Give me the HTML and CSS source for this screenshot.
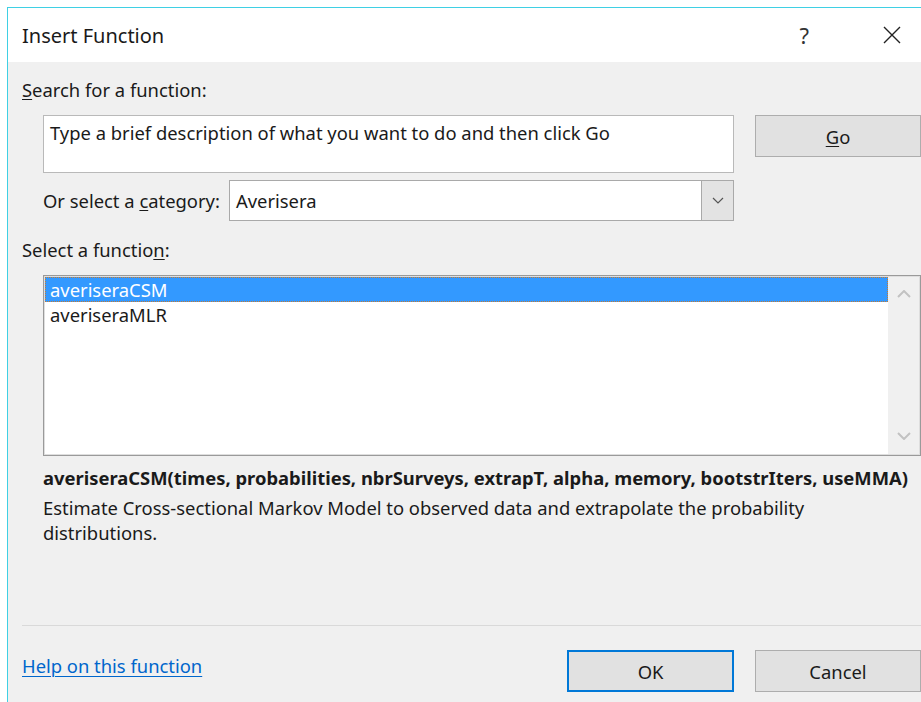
FILE: index.html
```html
<!DOCTYPE html>
<html lang="en">
<head>
<meta charset="utf-8">
<title>Insert Function</title>
<link rel="stylesheet" href="styles.css">
</head>
<body>
<div class="window">
  <header class="titlebar">
    <h1 class="title">Insert Function</h1>
    <div class="title-actions">
      <span class="help-btn">?</span>
      <svg class="close-btn" width="18" height="18" viewBox="0 0 18 18" aria-hidden="true">
        <path d="M1 1 L17 17 M17 1 L1 17" stroke="#222" stroke-width="1.4" fill="none"/>
      </svg>
    </div>
  </header>

  <main class="content">
    <div class="label"><u>S</u>earch for a function:</div>

    <div class="search-row">
      <div class="textbox">Type a brief description of what you want to do and then click Go</div>
      <button class="btn btn-go"><u>G</u>o</button>
    </div>

    <div class="category-row">
      <span class="category-label">Or select a <u>c</u>ategory:</span>
      <div class="select">
        <span class="select-value">Averisera</span>
        <span class="select-drop">
          <svg width="12" height="7" viewBox="0 0 12 7" aria-hidden="true">
            <path d="M1 1 L6 6 L11 1" stroke="#555" stroke-width="1.2" fill="none"/>
          </svg>
        </span>
      </div>
    </div>

    <div class="label label-list">Select a functio<u>n</u>:</div>

    <div class="listbox">
      <ul class="items">
        <li class="item selected">averiseraCSM</li>
        <li class="item">averiseraMLR</li>
      </ul>
      <div class="scrollbar">
        <svg width="14" height="8" viewBox="0 0 14 8" aria-hidden="true">
          <path d="M1 7 L7 1 L13 7" stroke="#c2c2c2" stroke-width="2" fill="none"/>
        </svg>
        <svg width="14" height="8" viewBox="0 0 14 8" aria-hidden="true">
          <path d="M1 1 L7 7 L13 1" stroke="#c2c2c2" stroke-width="2" fill="none"/>
        </svg>
      </div>
    </div>

    <p class="signature">averiseraCSM(times, probabilities, nbrSurveys, extrapT, alpha, memory, bootstrIters, useMMA)</p>
    <p class="description">Estimate Cross-sectional Markov Model to observed data and extrapolate the probability distributions.</p>

    <hr class="separator">

    <footer class="actions">
      <a class="help-link" href="#">Help on this function</a>
      <div class="buttons">
        <button class="btn btn-ok">OK</button>
        <button class="btn btn-cancel">Cancel</button>
      </div>
    </footer>
  </main>
</div>
</body>
</html>
```

FILE: styles.css
```css
* {
  box-sizing: border-box;
}

html, body {
  margin: 0;
  padding: 0;
  background: #ffffff;
  overflow: hidden;
}

body {
  font-family: "Noto Sans", "Open Sans", sans-serif;
  font-size: 18.4px;
  color: #1a1a1a;
}

.window {
  margin: 7px 0 0 7px;
  width: 914px;
  height: 695px;
  border-top: 1px solid #3fd0e4;
  border-left: 1px solid #3fd0e4;
  display: flex;
  flex-direction: column;
  overflow: hidden;
}

/* title bar */
.titlebar {
  height: 54px;
  flex: none;
  background: #ffffff;
  display: flex;
  align-items: center;
  justify-content: space-between;
  padding: 0 20px 0 14px;
}

.title {
  margin: 0;
  font-size: 20px;
  font-weight: normal;
  color: #1a1a1a;
}

.title-actions {
  display: flex;
  align-items: center;
  gap: 74px;
}

.help-btn {
  font-size: 22px;
  color: #333;
  line-height: 1;
}

.close-btn {
  display: block;
}

/* dialog body */
.content {
  flex: 1;
  background: #f0f0f0;
  padding: 16px 0 0 14px;
  display: flex;
  flex-direction: column;
}

.label {
  line-height: 24px;
  height: 24px;
}

u {
  text-decoration-thickness: 1px;
  text-underline-offset: 2px;
}

.search-row {
  margin-top: 13px;
  margin-left: 21px;
  display: flex;
  align-items: flex-start;
  gap: 21px;
}

.textbox {
  width: 691px;
  height: 58px;
  background: #ffffff;
  border: 1px solid #b9b9b9;
  padding: 5px 6px;
  line-height: 24px;
}

.btn {
  font-family: inherit;
  font-size: 18.4px;
  color: #1a1a1a;
  background: #e1e1e1;
  border: 1px solid #adadad;
  padding: 0;
  margin: 0;
}

.btn-go {
  width: 166px;
  height: 42px;
}

.category-row {
  margin-top: 7px;
  margin-left: 21px;
  display: flex;
  align-items: center;
  height: 41px;
}

.category-label {
  width: 186px;
  flex: none;
}

.select {
  width: 505px;
  height: 41px;
  background: #ffffff;
  border: 1px solid #a9a9a9;
  display: flex;
  align-items: stretch;
}

.select-value {
  flex: 1;
  display: flex;
  align-items: center;
  padding-left: 6px;
}

.select-drop {
  width: 32px;
  background: #e3e3e3;
  border-left: 1px solid #a9a9a9;
  display: flex;
  align-items: center;
  justify-content: center;
}

.label-list {
  margin-top: 17px;
}

.listbox {
  margin-top: 13px;
  margin-left: 21px;
  height: 181px;
  background: #ffffff;
  border: 1px solid #9a9a9a;
  box-shadow: inset 0 0 0 1px #dedede;
  padding: 1px 1px 1px 1px;
  display: flex;
}

.items {
  list-style: none;
  margin: 0;
  padding: 0;
  flex: 1;
}

.item {
  height: 25px;
  line-height: 25px;
  padding-left: 5px;
}

.item.selected {
  background: #3399ff;
  color: #ffffff;
  outline: 1px dotted #c47a32;
  outline-offset: -1px;
}

.scrollbar {
  width: 31px;
  background: #f0f0f0;
  display: flex;
  flex-direction: column;
  justify-content: space-between;
  align-items: center;
  padding: 13px 0 14px;
}

.scrollbar svg {
  display: block;
}

.signature {
  margin: 9px 0 0 21px;
  font-weight: bold;
  line-height: 25px;
  white-space: nowrap;
}

.description {
  margin: 5px 0 0 21px;
  line-height: 25px;
  width: 860px;
}

.separator {
  margin: auto 0 0 0;
  border: none;
  border-top: 1px solid #d9d9d9;
  height: 0;
}

.actions {
  display: flex;
  justify-content: space-between;
  align-items: flex-start;
  height: 76px;
  flex: none;
}

.help-link {
  margin-top: 28px;
  line-height: 24px;
  color: #0066cc;
  text-decoration: underline;
  text-decoration-thickness: 1px;
  text-underline-offset: 3px;
}

.buttons {
  margin-top: 24px;
  display: flex;
  gap: 21px;
}

.btn-ok {
  width: 167px;
  height: 42px;
  border: 2px solid #0078d7;
}

.btn-cancel {
  width: 166px;
  height: 42px;
}
```
